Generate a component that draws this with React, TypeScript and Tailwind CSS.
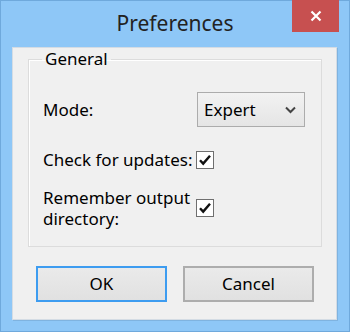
import React from 'react';

const font = { fontFamily: '"Noto Sans", "Open Sans", sans-serif' };

const CheckBox = () => (
  <span className="w-[18px] h-[18px] border border-[#6f6f6f] bg-white flex items-center justify-center">
    <svg width="14" height="14" viewBox="0 0 14 14">
      <path d="M2 7.2 L5.2 10.6 L12 2.8" fill="none" stroke="#111" strokeWidth="2.4" />
    </svg>
  </span>
);

export default function App() {
  return (
    <div
      className="w-[350px] h-[332px] bg-[#8ec7f7] border border-[#6fa9dc] flex flex-col text-[17px] text-black"
      style={font}
    >
      {/* title bar */}
      <div className="relative h-[46px] flex items-center justify-center">
        <span className="text-[21px] text-[#222] -mt-[1px]">Preferences</span>
        <button className="absolute top-[-1px] right-[10px] w-[47px] h-[32px] bg-[#c75050] flex items-center justify-center">
          <svg width="12" height="12" viewBox="0 0 12 12">
            <path d="M1.5 1.5 L10.5 10.5 M10.5 1.5 L1.5 10.5" stroke="#fff" strokeWidth="2.2" />
          </svg>
        </button>
      </div>

      {/* client area */}
      <div className="ml-[11px] mr-[12px] h-[273px] bg-[#f0f0f0] border border-[#d4dce4] shadow-[1px_1px_0_#7fb3e0] pt-[2px] pl-[15px]">
        <fieldset className="w-[294px] h-[197px] border border-[#dcdcdc] shadow-[inset_1px_1px_0_#fff] pl-[14px] pr-2">
          <legend className="ml-[-1px] px-[3px] leading-[18px]">General</legend>
          <div className="grid grid-cols-[154px_auto] items-center">
            <span className="pt-[24px]">Mode:</span>
            <div className="pt-[24px]">
              <div className="w-[108px] h-[35px] border border-[#acacac] bg-gradient-to-b from-[#f2f2f2] to-[#e5e5e5] flex items-center justify-between pl-[6px] pr-[8px]">
                <span>Expert</span>
                <svg width="11" height="8" viewBox="0 0 11 8">
                  <path d="M1 1.5 L5.5 6 L10 1.5" fill="none" stroke="#444" strokeWidth="2" />
                </svg>
              </div>
            </div>
            <span className="pt-[22px] leading-[21px] whitespace-nowrap">Check for updates:</span>
            <div className="pt-[22px] -ml-[1px]">
              <CheckBox />
            </div>
            <span className="pt-[17px] leading-[21px] whitespace-nowrap">
              Remember output
              <br />
              directory:
            </span>
            <div className="pt-[17px] -ml-[1px]">
              <CheckBox />
            </div>
          </div>
        </fieldset>

        <div className="flex gap-[16px] mt-[19px] ml-[8px]">
          <button className="w-[131px] h-[36px] border-2 border-[#3d9cf0] bg-gradient-to-b from-[#eaeaea] to-[#e1e1e1]">
            OK
          </button>
          <button className="w-[131px] h-[36px] border-2 border-[#adadad] bg-gradient-to-b from-[#eaeaea] to-[#e1e1e1]">
            Cancel
          </button>
        </div>
      </div>
    </div>
  );
}
